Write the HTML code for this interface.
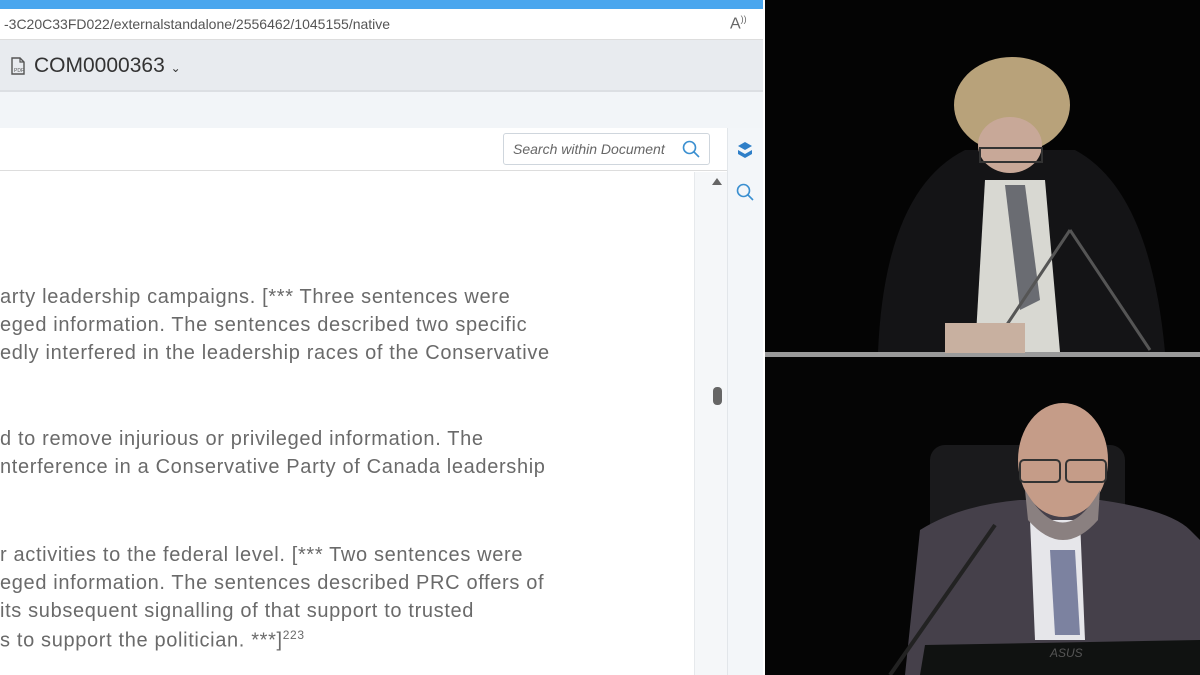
<!DOCTYPE html>
<html><head><meta charset="utf-8"><style>
*{margin:0;padding:0;box-sizing:border-box}
body{width:1200px;height:675px;overflow:hidden;background:#000;font-family:"Liberation Sans",sans-serif;position:relative}
.abs{position:absolute}
.t{position:absolute;left:0;font-size:20px;color:#6a6a6a;white-space:nowrap;letter-spacing:0.65px}
</style></head><body>
<div class="abs" style="left:0;top:0;width:765px;height:675px;background:#fff"></div>
<div class="abs" style="left:0;top:0;width:763px;height:9px;background:#4aa6ee"></div>
<div class="abs" style="left:0;top:9px;width:763px;height:31px;background:#fff;border-bottom:1px solid #ddd"></div>
<div class="abs" style="left:4px;top:16px;font-size:14px;color:#555">-3C20C33FD022/externalstandalone/2556462/1045155/native</div>
<div class="abs" style="left:730px;top:14px;font-size:16px;color:#666">A<sup style="font-size:9px">))</sup></div>
<div class="abs" style="left:0;top:40px;width:763px;height:52px;background:#e8ebef;border-bottom:2px solid #dcdfe3"></div>
<svg class="abs" style="left:10px;top:57px" width="16" height="18" viewBox="0 0 16 18"><path d="M2 1h8l4 4v12H2z" fill="none" stroke="#555" stroke-width="1.4"/><path d="M10 1v4h4" fill="none" stroke="#555" stroke-width="1.2"/><text x="4" y="15" font-size="5" fill="#555" font-family="Liberation Sans">PDF</text></svg>
<div class="abs" style="left:34px;top:54px;font-size:21px;color:#333">COM0000363 <span style="font-size:12px">⌄</span></div>
<div class="abs" style="left:0;top:92px;width:763px;height:36px;background:#f2f5f8"></div>
<div class="abs" style="left:0;top:128px;width:727px;height:43px;background:#fff;border-bottom:1px solid #ddd"></div>
<div class="abs" style="left:503px;top:133px;width:207px;height:32px;border:1px solid #cfd6dd;border-radius:3px;background:#fff"></div>
<div class="abs" style="left:513px;top:141px;font-size:14px;font-style:italic;color:#666">Search within Document</div>
<svg class="abs" style="left:682px;top:140px" width="18" height="18"><circle cx="7.5" cy="7.5" r="6" fill="none" stroke="#3a8fd0" stroke-width="1.6"/><path d="M12 12l5 5" stroke="#3a8fd0" stroke-width="1.6"/></svg>
<div class="abs" style="left:727px;top:128px;width:36px;height:547px;background:#f3f6f9;border-left:1px solid #e2e6ea"></div>
<svg class="abs" style="left:737px;top:141px" width="16" height="18"><path d="M8 1l7 4-7 4-7-4z" fill="#2f7fc8"/><path d="M1 9l7 4 7-4v4l-7 4-7-4z" fill="#2f7fc8"/></svg>
<svg class="abs" style="left:736px;top:183px" width="18" height="18"><circle cx="7.5" cy="7.5" r="6" fill="none" stroke="#3a8fd0" stroke-width="1.6"/><path d="M12 12l5 5" stroke="#3a8fd0" stroke-width="1.6"/></svg>
<div class="abs" style="left:694px;top:172px;width:33px;height:503px;background:#f5f7f9;border-left:1px solid #e6e9ec"></div>
<div class="abs" style="left:712px;top:178px;width:0;height:0;border-left:5px solid transparent;border-right:5px solid transparent;border-bottom:7px solid #666"></div>
<div class="abs" style="left:713px;top:387px;width:9px;height:18px;border-radius:4px;background:#666"></div>
<div class="t" style="top:286px">arty leadership campaigns. [*** Three sentences were</div>
<div class="t" style="top:314px">eged information. The sentences described two specific</div>
<div class="t" style="top:342px">edly interfered in the leadership races of the Conservative</div>
<div class="t" style="top:428px">d to remove injurious or privileged information. The</div>
<div class="t" style="top:456px">nterference in a Conservative Party of Canada leadership</div>
<div class="t" style="top:544px">r activities to the federal level. [*** Two sentences were</div>
<div class="t" style="top:572px">eged information. The sentences described PRC offers of</div>
<div class="t" style="top:600px">its subsequent signalling of that support to trusted</div>
<div class="t" style="top:628px">s to support the politician. ***]<sup style="font-size:12px">223</sup></div>
<svg class="abs" style="left:765px;top:0" width="435" height="675" viewBox="765 0 435 675">
<rect x="765" y="0" width="435" height="675" fill="#040404"/>
<rect x="765" y="352" width="435" height="5" fill="#9a9a9a"/>
<path d="M878 352 Q885 190 965 150 L1075 150 Q1150 190 1165 352z" fill="#141416"/>
<path d="M985 180 L1045 180 L1060 352 L975 352z" fill="#d8d8d2"/>
<path d="M1005 185 L1025 185 L1040 300 L1020 310z" fill="#6a6c72"/>
<ellipse cx="1012" cy="105" rx="58" ry="48" fill="#b8a27a"/>
<ellipse cx="1010" cy="145" rx="32" ry="28" fill="#c8a898"/>
<rect x="980" y="148" width="62" height="14" fill="none" stroke="#333" stroke-width="2"/>
<path d="M990 350 L1070 230 M1070 230 L1150 350" stroke="#555" stroke-width="3" fill="none"/>
<rect x="945" y="323" width="80" height="30" fill="#c8b0a0"/>
<rect x="765" y="357" width="435" height="318" fill="#050505"/>
<rect x="930" y="445" width="195" height="120" rx="15" fill="#1a1a1c"/>
<path d="M905 675 L920 530 Q960 505 1020 500 L1100 500 Q1170 510 1190 530 L1200 540 L1200 675z" fill="#45404a"/>
<path d="M1030 520 L1080 520 L1085 640 L1035 640z" fill="#e6e6ea"/>
<path d="M1050 550 L1075 550 L1080 635 L1055 635z" fill="#7c82a0"/>
<ellipse cx="1063" cy="460" rx="45" ry="57" fill="#c59c88"/>
<path d="M1025 490 Q1063 555 1100 490 L1098 520 Q1063 560 1028 520z" fill="#8a8080"/>
<rect x="1020" y="460" width="40" height="22" rx="4" fill="none" stroke="#333" stroke-width="2"/>
<rect x="1066" y="460" width="40" height="22" rx="4" fill="none" stroke="#333" stroke-width="2"/>
<path d="M890 675 L995 525" stroke="#222" stroke-width="4"/>
<path d="M925 645 L1200 640 L1200 675 L920 675z" fill="#101211"/>
<text x="1050" y="657" font-size="12" fill="#555" font-family="Liberation Sans" font-style="italic">ASUS</text>
</svg>
</body></html>
